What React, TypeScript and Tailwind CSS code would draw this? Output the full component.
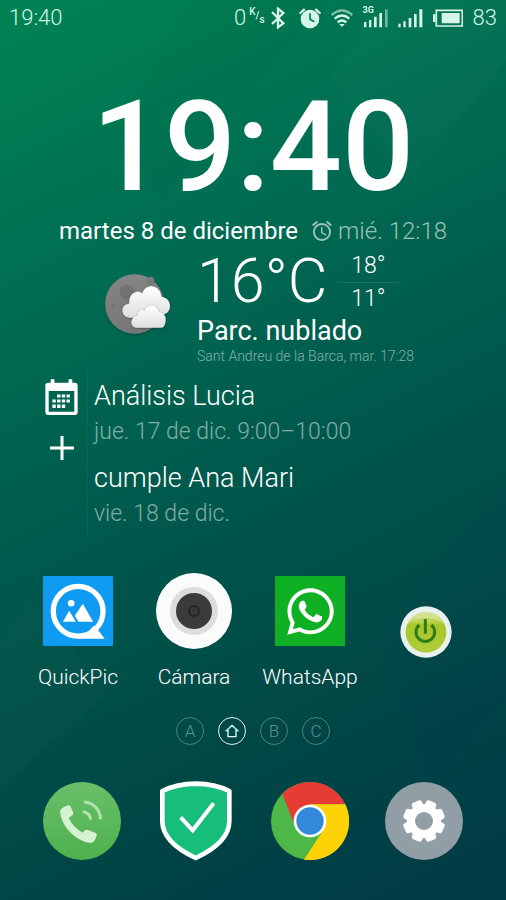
import type { ReactNode } from "react";
import { FaWhatsapp } from "react-icons/fa";
import { MdAlarm } from "react-icons/md";

const EVENTS = [
  { title: "Análisis Lucia", date: "jue. 17 de dic. 9:00–10:00" },
  { title: "cumple Ana Mari", date: "vie. 18 de dic." },
];

const PAGES = ["A", "home", "B", "C"];

function Wallpaper() {
  return (
    <svg
      className="absolute inset-0 -z-10 h-full w-full"
      viewBox="0 0 506 900"
      preserveAspectRatio="none"
      aria-hidden="true"
    >
      <defs>
        <linearGradient id="wall" gradientUnits="userSpaceOnUse" x1="40" y1="0" x2="460" y2="860">
          <stop offset="0" stopColor="#008254" />
          <stop offset="0.3" stopColor="#006b52" />
          <stop offset="0.55" stopColor="#00574c" />
          <stop offset="0.8" stopColor="#004746" />
          <stop offset="1" stopColor="#003c46" />
        </linearGradient>
      </defs>
      <rect width="506" height="900" fill="url(#wall)" />
      <g fillOpacity="0.015">
        <path d="M190 0 120 130 160 200 330 0Z" fill="#000" />
        <path d="M330 80 410 180 506 60V0H380Z" fill="#fff" />
        <path d="M0 640 30 600 110 690 0 790Z" fill="#fff" />
        <path d="M506 480 380 640 430 790 506 700Z" fill="#00f" />
      </g>
    </svg>
  );
}

function StatusBar() {
  return (
    <header className="flex h-9 items-center justify-between px-[9px] text-[22px] font-light leading-9 text-[#d5f5e6]">
      <span>19:40</span>
      <div className="flex items-center gap-[10px]">
        <div className="-mr-1 flex items-center gap-[3px]">
          <span>0</span>
          <span className="flex text-[10px] font-medium leading-3">
            <span className="-mt-1">K</span>
            <span>/</span>
            <span className="mt-1">s</span>
          </span>
        </div>
        <svg className="h-[22px] w-[14px]" viewBox="138 20 42 66" fill="none" stroke="currentColor" strokeWidth="7">
          <path d="M141 35 175 69 159 81V25L175 38 141 71" />
        </svg>
        <svg className="h-[21px] w-[26px]" viewBox="211 22 78 63">
          <circle cx="256" cy="55" r="28" fill="currentColor" />
          <path d="M227 37 238 27M285 37 274 27" stroke="currentColor" strokeWidth="7" strokeLinecap="round" />
          <path d="M256 38V56L269 63" fill="none" stroke="#007a52" strokeWidth="5" />
        </svg>
        <svg className="h-[18px] w-[22px]" viewBox="318 24 66 54" fill="none" stroke="currentColor" strokeWidth="7">
          <path d="M320 42Q351 15 382 42" opacity=".6" />
          <path d="M329 53Q351 34 373 53" />
          <path d="M338 64Q351 53 364 64" />
          <path d="M343 69 351 78 359 69Z" fill="currentColor" stroke="none" />
        </svg>
        <div className="relative">
          <span className="absolute -top-[2px] left-0 text-[9px] font-bold leading-[9px]">3G</span>
          <svg className="h-[20px] w-[25px]" viewBox="415 22 75 60" fill="currentColor">
            <path d="M418 64h7v16h-7zM433 58h7v22h-7zM448 48h8v32h-8zM464 37h8v43h-8z" />
            <path d="M481 26h8v54h-8z" opacity=".5" />
          </svg>
        </div>
        <svg className="h-[20px] w-[25px]" viewBox="522 22 75 60" fill="currentColor">
          <path d="M523 69h7v11h-7zM538 62h7v18h-7zM554 52h8v28h-8zM570 40h8v40h-8zM586 26h9v54h-9z" />
        </svg>
        <svg className="h-[18px] w-[30px]" viewBox="624 26 90 54" fill="currentColor">
          <path d="M634 30H712V77H634Z" fill="none" stroke="currentColor" strokeWidth="5" />
          <path d="M624 42h8v23h-8zM650 38h54v31h-54z" />
        </svg>
        <span>83</span>
      </div>
    </header>
  );
}

function MoonCloud() {
  return (
    <svg className="h-[66px] w-[68px]" viewBox="42 80 204 198" role="img" aria-label="Parcialmente nublado">
      <defs>
        <linearGradient id="moon" x1="0" y1="0" x2="0" y2="1">
          <stop offset="0" stopColor="#858585" />
          <stop offset="1" stopColor="#777777" />
        </linearGradient>
        <linearGradient id="cloud" x1="0" y1="0" x2="0" y2="1">
          <stop offset="0" stopColor="#ffffff" />
          <stop offset="1" stopColor="#dedede" />
        </linearGradient>
        <filter id="shade" x="-20%" y="-20%" width="140%" height="150%">
          <feDropShadow dx="0" dy="2" stdDeviation="3" floodOpacity="0.4" />
        </filter>
      </defs>
      <circle cx="134" cy="176" r="89" fill="url(#moon)" filter="url(#shade)" />
      <circle cx="111" cy="141" r="23" fill="#727272" />
      <circle cx="181" cy="106" r="12" fill="#7a7a7a" />
      <circle cx="70" cy="181" r="5" fill="#667078" />
      <path
        d="M120 217C90 217 90 176 118 175C115 141 145 132 157 145C166 113 211 116 214 154C248 158 248 203 218 208L205 217Z"
        fill="url(#cloud)"
        filter="url(#shade)"
      />
      <path
        d="M140 247C118 247 120 213 142 212C144 196 156 191 164 196C171 175 203 176 206 201C225 201 231 219 225 235Q223 247 213 247Z"
        fill="url(#cloud)"
        filter="url(#shade)"
      />
    </svg>
  );
}

function Weather() {
  return (
    <section className="mx-auto flex w-full max-w-[320px] gap-9 pt-[7px]">
      <div className="w-[68px] shrink-0 pt-[18px] pl-[11px]">
        <MoonCloud />
      </div>
      <div className="shrink-0">
        <div className="flex h-[60px] gap-[10px]">
          <p className="text-[61px] font-light leading-[54px]">16°C</p>
          <div className="flex w-[62px] flex-col text-center text-[23px] font-light leading-8">
            <span className="-mt-1 border-b border-white/10 leading-8">18°</span>
            <span>11°</span>
          </div>
        </div>
        <p className="text-[27px] leading-[34px]">Parc. nublado</p>
        <p className="text-sm font-light leading-4 text-white/50">Sant Andreu de la Barca, mar. 17:28</p>
      </div>
    </section>
  );
}

function Agenda() {
  return (
    <section className="mt-[7px] flex pl-[45px]">
      <div className="flex w-[43px] flex-col gap-5 border-r border-white/5 pt-2">
        <button type="button" aria-label="Calendario" className="h-9 w-[33px]">
          <svg viewBox="47 41 98 108" fill="#fff">
            <path
              fillRule="evenodd"
              d="M57 52H64V42H75V52H117V42H128V52H136Q144 52 144 60V140Q144 148 136 148H56Q48 148 48 140V60Q48 52 57 52ZM58 77V138H134V77Z"
            />
            <path d="M83 87h10v9H83zM97 87h10v9H97zM111 87h10v9H111zM69 102h10v9H69zM83 102h10v9H83zM97 102h10v9H97zM111 102h10v9H111zM69 117h10v10H69zM83 117h10v10H83zM97 117h10v10H97z" />
          </svg>
        </button>
        <button type="button" aria-label="Añadir evento" className="h-[26px] w-[33px]">
          <svg className="mx-auto h-[26px] w-[26px]" viewBox="0 0 26 26" stroke="#fff" strokeWidth="3">
            <path d="M13 1V25M1 13H25" />
          </svg>
        </button>
      </div>
      <ul className="flex flex-col gap-[10px] pt-[7px] pb-1 pl-[6px] font-light">
        {EVENTS.map((event) => (
          <li key={event.title}>
            <p className="text-[27px] leading-9">{event.title}</p>
            <p className="text-[23px] leading-9 text-white/50">{event.date}</p>
          </li>
        ))}
      </ul>
    </section>
  );
}

function QuickPicIcon() {
  return (
    <svg className="h-[70px] w-[70px]" viewBox="37 48 211 211">
      <rect x="37" y="48" width="211" height="211" rx="4" fill="#109bf2" />
      <circle cx="143" cy="154" r="75" fill="none" stroke="#fff" strokeWidth="16" />
      <path d="M143 237H223L203 211 190 198 165 225Z" fill="#fff" />
      <circle cx="122" cy="130" r="10" fill="#fff" />
      <path d="M97 186 116 153 136 186ZM157 132 188 186H144L133 168Z" fill="#fff" />
    </svg>
  );
}

function CameraIcon() {
  return (
    <svg className="h-[76px] w-[76px]" viewBox="0 0 76 76">
      <circle cx="38" cy="38" r="38" fill="#fbfbfb" />
      <circle cx="38" cy="38" r="24" fill="#dedcdc" />
      <circle cx="38" cy="38" r="18" fill="#3b3b3b" />
      <circle cx="38" cy="38" r="5" fill="#383838" stroke="#262626" strokeWidth="2" />
    </svg>
  );
}

function PowerIcon() {
  return (
    <svg className="h-[52px] w-[52px]" viewBox="450 138 156 156">
      <defs>
        <linearGradient id="lime" x1="0" y1="0" x2="0" y2="1">
          <stop offset="0" stopColor="#c6d873" />
          <stop offset="0.25" stopColor="#bdd450" />
          <stop offset="0.3" stopColor="#a6c72a" />
          <stop offset="1" stopColor="#b0cc3c" />
        </linearGradient>
      </defs>
      <circle cx="528" cy="216" r="77" fill="#e9f1ee" />
      <circle cx="528" cy="217" r="61" fill="url(#lime)" />
      <path d="M474 188Q528 124 582 188Q528 160 474 188Z" fill="#e3ebb4" opacity=".5" />
      <path d="M508 195A28 28 0 1 0 544 195" fill="none" stroke="#2f7d16" strokeWidth="9" />
      <path d="M526 177V221" stroke="#2f7d16" strokeWidth="9" />
    </svg>
  );
}

function PhoneIcon() {
  return (
    <svg className="h-[78px] w-[78px]" viewBox="39 35 234 234">
      <defs>
        <linearGradient id="call" x1="0" y1="0" x2="0" y2="1">
          <stop offset="0" stopColor="#6abf69" />
          <stop offset="1" stopColor="#4db14e" />
        </linearGradient>
      </defs>
      <circle cx="156" cy="152" r="117" fill="url(#call)" />
      <path
        d="M90 124Q92 112 115 105Q120 104 122 109L130 127Q131 132 127 135L116 143Q130 172 158 187L165 180Q169 177 174 179L197 188Q202 191 200 196Q195 212 186 217Q172 220 148 207Q97 175 90 124Z"
        fill="#d5f3d2"
      />
      <g fill="none" stroke="#b4e3b0" strokeWidth="9">
        <path d="M158 124A25 25 0 0 1 182 148" />
        <path d="M162 95A51 51 0 0 1 211 147" />
      </g>
    </svg>
  );
}

function ShieldIcon() {
  return (
    <svg className="h-[80px] w-[72px]" viewBox="390 32 216 240">
      <path
        d="M397 62Q440 41 497 40Q555 41 598 62V152Q598 216 497 263Q397 216 397 152Z"
        fill="#16bd7b"
        stroke="#fff"
        strokeWidth="14"
        strokeLinejoin="round"
      />
      <path d="M452 141 488 180 551 99" fill="none" stroke="#fff" strokeWidth="12" />
    </svg>
  );
}

function ChromeIcon() {
  return (
    <svg className="h-[78px] w-[78px]" viewBox="63 35 234 234">
      <circle cx="180" cy="152" r="117" fill="#4db748" />
      <path d="M97 70A117 117 0 0 1 286 102H180L134 166Z" fill="#e73c35" />
      <path d="M286 102A117 117 0 0 1 162 268L222 176 180 102Z" fill="#fdd206" />
      <circle cx="180" cy="152" r="49" fill="#fff" />
      <circle cx="180" cy="152" r="41" fill="#3489dc" />
    </svg>
  );
}

const GEAR_TEETH = [22.5, 67.5, 112.5, 157.5, 202.5, 247.5, 292.5, 337.5];

function SettingsIcon() {
  return (
    <svg className="h-[78px] w-[78px]" viewBox="-39 -39 78 78">
      <circle r="39" fill="#929ea5" />
      <circle r="13" fill="none" stroke="#fff" strokeWidth="8" />
      {GEAR_TEETH.map((angle) => (
        <path
          key={angle}
          d="M-6 -14 -5 -20Q-4 -21 -3 -21H3Q4 -21 5 -20L6 -14Z"
          fill="#fff"
          transform={`rotate(${angle})`}
        />
      ))}
    </svg>
  );
}

function AppButton({ label, name, children }: { label?: string; name?: string; children: ReactNode }) {
  return (
    <button type="button" aria-label={name} className="flex flex-1 flex-col items-center">
      <span className="flex h-20 items-center justify-center">{children}</span>
      {label && <span className="mt-[10px] text-[21px] font-light leading-8">{label}</span>}
    </button>
  );
}

export default function App() {
  return (
    <div className="relative isolate flex min-h-screen flex-col overflow-hidden font-['Roboto',sans-serif] text-white">
      <Wallpaper />
      <StatusBar />

      <main className="flex flex-col">
        <h1 className="mt-[55px] text-center text-[127px] font-medium leading-[112px]">19:40</h1>
        <div className="mt-3 flex items-center justify-center gap-3 whitespace-nowrap text-[24px] leading-8">
          <span>martes 8 de diciembre</span>
          <span className="flex items-center gap-1 font-light text-white/60">
            <MdAlarm size={24} />
            mié. 12:18
          </span>
        </div>
        <Weather />
        <Agenda />

        <nav aria-label="Aplicaciones" className="mt-[35px] flex pl-5 pr-[22px]">
          <AppButton label="QuickPic">
            <QuickPicIcon />
          </AppButton>
          <AppButton label="Cámara">
            <CameraIcon />
          </AppButton>
          <AppButton label="WhatsApp">
            <span className="flex h-[70px] w-[70px] items-center justify-center bg-[#0fb023]">
              <FaWhatsapp size={53} />
            </span>
          </AppButton>
          <button type="button" aria-label="Apagar pantalla" className="flex flex-1 items-center justify-center">
            <PowerIcon />
          </button>
        </nav>

        <nav aria-label="Pantallas" className="mt-6 flex justify-center gap-[14px]">
          {PAGES.map((page) =>
            page === "home" ? (
              <button
                key={page}
                type="button"
                aria-label="Inicio"
                aria-current="page"
                className="flex size-7 items-center justify-center rounded-full border border-white/90"
              >
                <svg className="size-4" viewBox="0 0 48 48" fill="none" stroke="#dff" strokeWidth="4">
                  <path d="M7 23 24 7 41 23H36V41H12V23Z" />
                </svg>
              </button>
            ) : (
              <button
                key={page}
                type="button"
                className="flex size-7 items-center justify-center rounded-full border border-white/30 text-[17px] font-light leading-4 text-white/40"
              >
                {page}
              </button>
            )
          )}
        </nav>
      </main>

      <footer className="mt-auto flex px-[25px] pb-[39px]">
        <AppButton name="Teléfono">
          <PhoneIcon />
        </AppButton>
        <AppButton name="Seguridad">
          <ShieldIcon />
        </AppButton>
        <AppButton name="Chrome">
          <ChromeIcon />
        </AppButton>
        <AppButton name="Ajustes">
          <SettingsIcon />
        </AppButton>
      </footer>
    </div>
  );
}
